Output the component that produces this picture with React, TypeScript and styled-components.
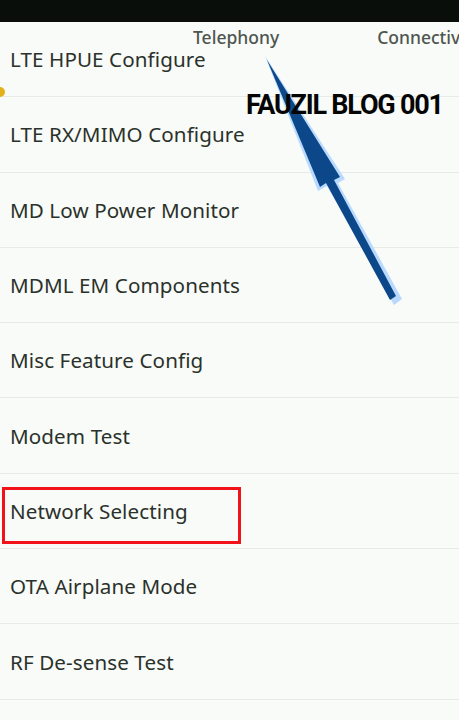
import styled, { createGlobalStyle } from 'styled-components';

const GlobalStyle = createGlobalStyle`
  html, body {
    margin: 0;
    padding: 0;
    background: #f8fbf7;
  }
  body {
    font-family: "Noto Sans", "Open Sans", sans-serif;
  }
`;

// #region styled
const Screen = styled.div`
  position: relative;
  width: 459px;
  height: 720px;
  overflow: hidden;
  background: #f8fbf7;
`;

const StatusBar = styled.div`
  height: 22px;
  background: #0a0e0a;
`;

const List = styled.ul`
  list-style: none;
  margin: 0;
  padding: 0;
`;

const Row = styled.li`
  height: 74.3px;
  display: flex;
  align-items: center;
  padding-left: 10px;
  border-bottom: 1px solid #e7ebe6;
  color: #2b312b;
  font-size: 20.6px;
  letter-spacing: 0.1px;
`;

const Tabs = styled.div`
  position: absolute;
  top: 25px;
  left: 193px;
  right: 0;
  display: flex;
  gap: 98px;
  overflow: hidden;
  font-size: 17.5px;
  font-weight: 500;
  color: #4f554f;
  white-space: nowrap;
`;

const Watermark = styled.div`
  position: absolute;
  top: 89px;
  left: 246px;
  font-family: Roboto, sans-serif;
  font-weight: 700;
  font-size: 27px;
  letter-spacing: -1.2px;
  color: #050505;
`;

const Highlight = styled.div`
  position: absolute;
  left: 2px;
  top: 487px;
  width: 233px;
  height: 51px;
  border: 3px solid #f2121a;
`;

const Overlay = styled.svg`
  position: absolute;
  inset: 0;
  pointer-events: none;
`;
// #endregion

const items = [
  'LTE HPUE Configure',
  'LTE RX/MIMO Configure',
  'MD Low Power Monitor',
  'MDML EM Components',
  'Misc Feature Config',
  'Modem Test',
  'Network Selecting',
  'OTA Airplane Mode',
  'RF De-sense Test',
];

const App = () => (
  <Screen>
    <GlobalStyle />
    <StatusBar />
    <List>
      {items.map(item => (
        <Row key={item}>{item}</Row>
      ))}
    </List>
    <Tabs>
      <span>Telephony</span>
      <span>Connectivity</span>
    </Tabs>
    <Overlay width="459" height="720" viewBox="0 0 459 720">
      <circle cx="0" cy="92" r="5" fill="#e3b21a" />
      <g fill="#b9d9ff">
        <polygon points="265,56 345,179 338,183 402,299 394,305 327,186 318,191" />
      </g>
      <g fill="#0c4889">
        <polygon points="267,60 340,177 334,180 396,296 390,300 326,183 320,187" />
      </g>
    </Overlay>
    <Watermark>FAUZIL BLOG 001</Watermark>
    <Highlight />
  </Screen>
);

export default App;
